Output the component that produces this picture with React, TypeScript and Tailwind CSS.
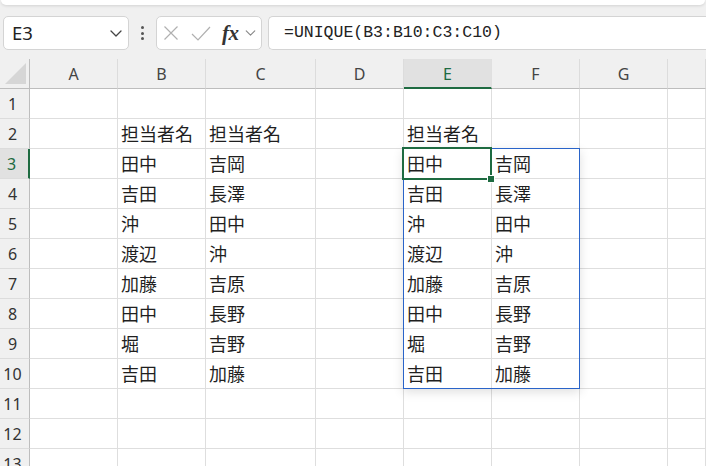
import React from "react";

const ui = { fontFamily: '"Noto Sans", "Open Sans", sans-serif' };
const cjk = { fontFamily: '"Noto Sans CJK JP", "Noto Sans", sans-serif' };

const cols = ["A", "B", "C", "D", "E", "F", "G", ""];
const left = ["田中", "吉田", "沖", "渡辺", "加藤", "田中", "堀", "吉田"];
const right = ["吉岡", "長澤", "田中", "沖", "吉原", "長野", "吉野", "加藤"];

function cellText(row: number, col: number): string {
  if (row === 2 && (col === 1 || col === 2 || col === 4)) return "担当者名";
  if (row >= 3 && row <= 10) {
    if (col === 1 || col === 4) return left[row - 3];
    if (col === 2 || col === 5) return right[row - 3];
  }
  return "";
}

function Chevron({ className }: { className?: string }) {
  return (
    <svg viewBox="0 0 12 7" className={className} fill="none">
      <path d="M1 1l5 5 5-5" stroke="currentColor" strokeWidth="1.3" strokeLinecap="round" strokeLinejoin="round" />
    </svg>
  );
}

export default function App() {
  const rows = Array.from({ length: 13 }, (_, i) => i + 1);

  return (
    <div className="w-[706px] h-[466px] overflow-hidden bg-[#f0f0f0] text-[#222]" style={ui}>
      {/* ribbon edge */}
      <div className="h-[5px] mx-[1px] bg-white rounded-b-[6px] shadow-[0_1px_3px_rgba(0,0,0,0.12)]" />

      {/* formula bar row */}
      <div className="mt-[11px] h-[34px] flex items-stretch pl-[3px]">
        <div className="w-[126px] bg-white border border-[#d4d4d4] rounded-[5px] flex items-center pl-[8px] pr-[6px]">
          <span className="text-[18.5px] leading-none text-[#222] flex-1">E3</span>
          <Chevron className="w-[12px] h-[7px] text-[#444]" />
        </div>
        <div className="w-[27px] flex flex-col items-center justify-center gap-[2.5px]">
          <span className="w-[3px] h-[3px] rounded-full bg-[#555]" />
          <span className="w-[3px] h-[3px] rounded-full bg-[#555]" />
          <span className="w-[3px] h-[3px] rounded-full bg-[#555]" />
        </div>
        <div className="w-[106px] bg-white border border-[#d4d4d4] rounded-[5px] flex items-center pl-[6px]">
          <svg viewBox="0 0 16 16" className="w-[16px] h-[16px] text-[#b0b0b0]" fill="none">
            <path d="M1.5 1.5l13 13M14.5 1.5l-13 13" stroke="currentColor" strokeWidth="1.2" />
          </svg>
          <svg viewBox="0 0 20 15" className="ml-[12px] w-[20px] h-[15px] text-[#b0b0b0]" fill="none">
            <path d="M1 8l6 6L19 1" stroke="currentColor" strokeWidth="1.2" />
          </svg>
          <span
            className="ml-[11px] text-[21px] leading-none italic font-semibold text-[#333] tracking-[-0.5px]"
            style={{ fontFamily: '"Liberation Serif", "DejaVu Serif", serif' }}
          >
            fx
          </span>
          <Chevron className="ml-[6px] w-[11px] h-[6px] text-[#888]" />
        </div>
        <div className="ml-[6px] flex-1 bg-white border border-r-0 border-[#d4d4d4] rounded-l-[5px] flex items-center pl-[15px]">
          <span className="text-[16.5px] text-[#222]" style={{ fontFamily: '"Liberation Mono", "DejaVu Sans Mono", monospace' }}>
            =UNIQUE(B3:B10:C3:C10)
          </span>
        </div>
      </div>

      {/* sheet grid */}
      <div className="relative mt-[9px]">
        <div className="grid grid-cols-[30px_88px_88px_110px_88px_88px_88px_88px_1fr]">
          {/* header row */}
          <div className="h-[30px] border-r border-b border-[#bdbdbd] relative">
            <svg viewBox="0 0 22 22" className="absolute left-[5px] top-[4px] w-[21px] h-[21px]">
              <path d="M22 0V22H0Z" fill="#d6d6d6" />
            </svg>
          </div>
          {cols.map((c, i) => (
            <div
              key={c + i}
              className={
                i === 4
                  ? "h-[30px] bg-[#e1e1e1] border-r border-[#e0e0e0] border-b-2 border-b-[#1e6b41] flex justify-center pt-[3px] text-[16px] text-[#1e6b41]"
                  : "h-[30px] border-r border-[#dcdcdc] border-b border-b-[#bdbdbd] flex justify-center pt-[3px] text-[16px] text-[#444]"
              }
            >
              {c}
            </div>
          ))}

          {rows.map((r) => (
            <React.Fragment key={r}>
              <div
                className={
                  r === 3
                    ? "h-[30px] bg-[#e1e1e1] border-b border-[#dcdcdc] border-r-2 border-r-[#1e6b41] flex items-center justify-center pr-[5px] text-[16px] text-[#1e6b41]"
                    : "h-[30px] border-b border-[#dcdcdc] border-r border-r-[#bdbdbd] flex items-center justify-center pr-[4px] text-[16px] text-[#333]"
                }
              >
                {r}
              </div>
              {cols.map((_, ci) => (
                <div
                  key={ci}
                  className="h-[30px] bg-white border-r border-b border-[#dedede] flex items-center pl-[3px] text-[18px] text-[#1f1f1f] whitespace-nowrap overflow-hidden"
                  style={cjk}
                >
                  {cellText(r, ci)}
                </div>
              ))}
            </React.Fragment>
          ))}
        </div>

        {/* spill range outline */}
        <div className="absolute left-[403px] top-[89px] w-[177px] h-[241px] border border-[#2a64c9] shadow-[0_3px_10px_rgba(0,0,0,0.13)] pointer-events-none" />
        {/* active cell */}
        <div className="absolute left-[402px] top-[88px] w-[90px] h-[33px] border-2 border-[#1e6b41] pointer-events-none" />
        <div className="absolute left-[488px] top-[117px] w-[6px] h-[6px] bg-[#1e6b41] outline outline-1 outline-white pointer-events-none" />
      </div>
    </div>
  );
}
